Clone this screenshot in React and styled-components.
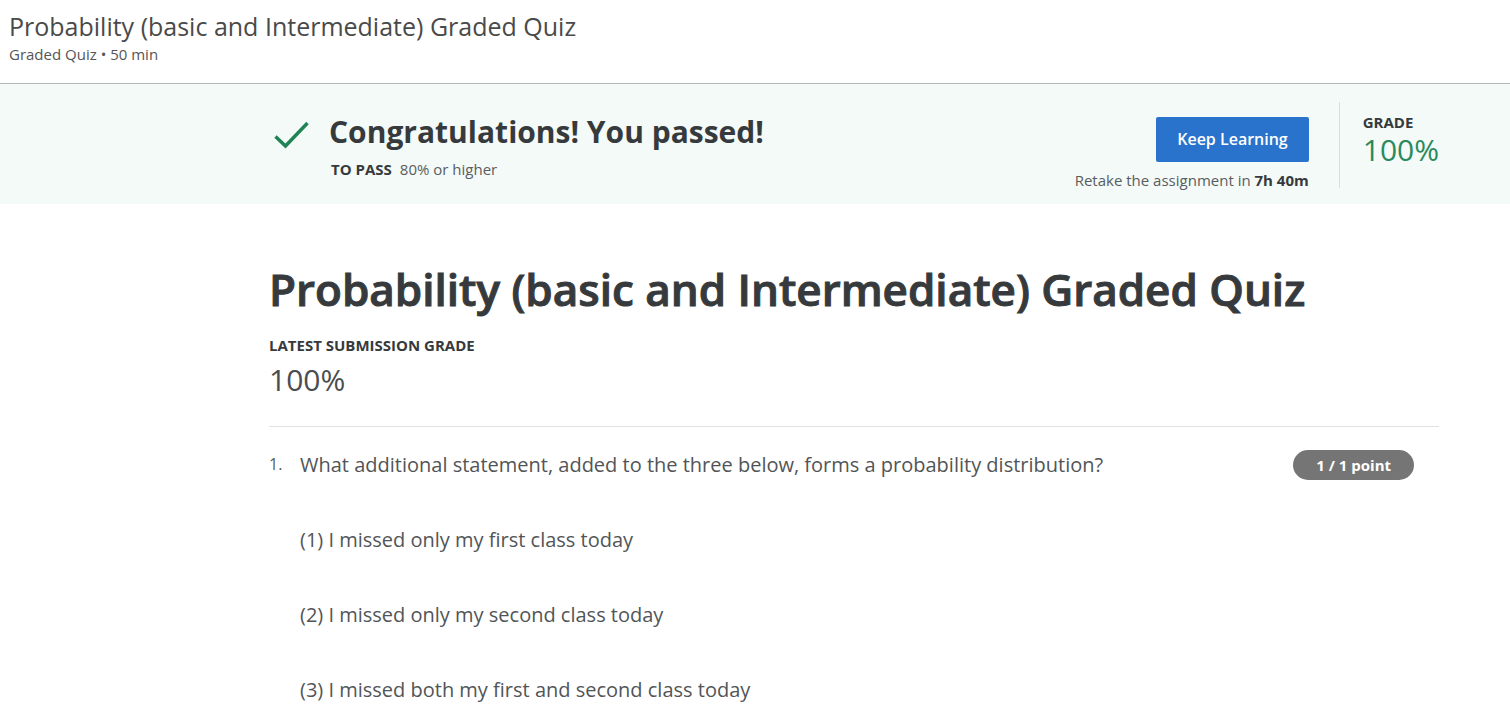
import React from 'react';
import styled, { createGlobalStyle } from 'styled-components';

const GlobalStyle = createGlobalStyle`
  * { box-sizing: border-box; }
  body {
    margin: 0;
    background: #fff;
    color: #373a3c;
    font-family: 'Open Sans', 'Noto Sans', sans-serif;
    font-size: 15px;
    line-height: 20px;
  }
  h1, h2, p, ol { margin: 0; padding: 0; }
`;

const TopBar = styled.header`
  height: 84px;
  padding: 10px 9px 0;
  border-bottom: 1px solid #b3b9b7;
`;
const CourseTitle = styled.p`
  font-size: 25px;
  line-height: 32px;
  color: #4a4a4a;
`;
const CourseMeta = styled.p`
  line-height: 24px;
  color: #555;
`;

const Banner = styled.section`
  display: flex;
  justify-content: space-between;
  min-height: 120px;
  padding: 18px 71px 16px 274px;
  background: #f3faf8;
`;
const Result = styled.div`
  display: flex;
  gap: 20px;
`;
const Check = styled.svg`
  width: 35px;
  height: 28px;
  margin-top: 19px;
`;
const ResultTitle = styled.h2`
  font-size: 30px;
  line-height: 40px;
  font-weight: 700;
  margin-top: 10px;
`;
const PassLine = styled.p`
  margin: 7px 0 0 2px;
  color: #5a5d5f;
`;
const Strong = styled.strong`
  font-weight: 700;
  color: #373a3c;
  margin-right: ${(p) => (p.$spaced ? '8px' : '0')};
`;
const Side = styled.div`
  display: flex;
`;
const Actions = styled.div`
  display: flex;
  flex-direction: column;
  align-items: flex-end;
  padding: 15px 30px 0 0;
`;
const PrimaryButton = styled.button`
  height: 45px;
  padding: 0 21px 2px;
  border: 0;
  border-radius: 2px;
  background: #2a73cc;
  color: #fff;
  font: 600 16px/24px 'Open Sans', sans-serif;
`;
const Retake = styled.p`
  margin-top: 10px;
  line-height: 16px;
  color: #5a5d5f;
`;
const Grade = styled.div`
  padding: 10px 0 0 23px;
  border-left: 1px solid #dadfdd;
`;
const Label = styled.p`
  font-weight: 700;
`;
const Score = styled.p`
  font-size: 30px;
  line-height: 36px;
  color: ${(p) => (p.$passed ? '#2a8a5d' : '#4a4d4f')};
  margin-top: ${(p) => (p.$passed ? '0' : '7px')};
`;

const Main = styled.main`
  padding: 55px 71px 0 269px;
`;
const QuizTitle = styled.h1`
  font-size: 44px;
  line-height: 60px;
  font-weight: 600;
  -webkit-text-stroke: 1px currentColor;
  margin-bottom: 16px;
`;
const Summary = styled.section`
  padding-bottom: 28px;
  border-bottom: 1px solid #e1e1e1;
`;
const Question = styled.li`
  display: flex;
  align-items: flex-start;
  padding: 23px 25px 0 0;
`;
const Number = styled.span`
  flex: 0 0 31px;
  font-size: 16px;
  line-height: 28px;
  color: #5a5d5f;
`;
const Prompt = styled.div`
  flex: 1;
  display: flex;
  flex-direction: column;
  gap: 45px;
  font-size: 20px;
  line-height: 30px;
  color: #525557;
`;
const Points = styled.span`
  padding: 0 23px;
  border-radius: 15px;
  background: #757575;
  color: #fff;
  font-weight: 700;
  line-height: 30px;
`;

const statements = [
  'What additional statement, added to the three below, forms a probability distribution?',
  '(1) I missed only my first class today',
  '(2) I missed only my second class today',
  '(3) I missed both my first and second class today',
];

export default function App() {
  return (
    <>
      <GlobalStyle />
      <TopBar>
        <CourseTitle>Probability (basic and Intermediate) Graded Quiz</CourseTitle>
        <CourseMeta>Graded Quiz • 50 min</CourseMeta>
      </TopBar>
      <Banner>
        <Result>
          <Check viewBox="0 0 35 28" aria-hidden="true">
            <path d="M1.5 15.5 L11.5 25 L33.5 2" fill="none" stroke="#1f8354" strokeWidth="3.4" />
          </Check>
          <div>
            <ResultTitle>Congratulations! You passed!</ResultTitle>
            <PassLine><Strong $spaced>TO PASS</Strong>80% or higher</PassLine>
          </div>
        </Result>
        <Side>
          <Actions>
            <PrimaryButton type="button">Keep Learning</PrimaryButton>
            <Retake>Retake the assignment in <Strong>7h 40m</Strong></Retake>
          </Actions>
          <Grade>
            <Label>GRADE</Label>
            <Score $passed>100%</Score>
          </Grade>
        </Side>
      </Banner>
      <Main>
        <Summary>
          <QuizTitle>Probability (basic and Intermediate) Graded Quiz</QuizTitle>
          <Label>LATEST SUBMISSION GRADE</Label>
          <Score>100%</Score>
        </Summary>
        <ol>
          <Question>
            <Number>1.</Number>
            <Prompt>
              {statements.map((s) => <p key={s}>{s}</p>)}
            </Prompt>
            <Points>1 / 1 point</Points>
          </Question>
        </ol>
      </Main>
    </>
  );
}
